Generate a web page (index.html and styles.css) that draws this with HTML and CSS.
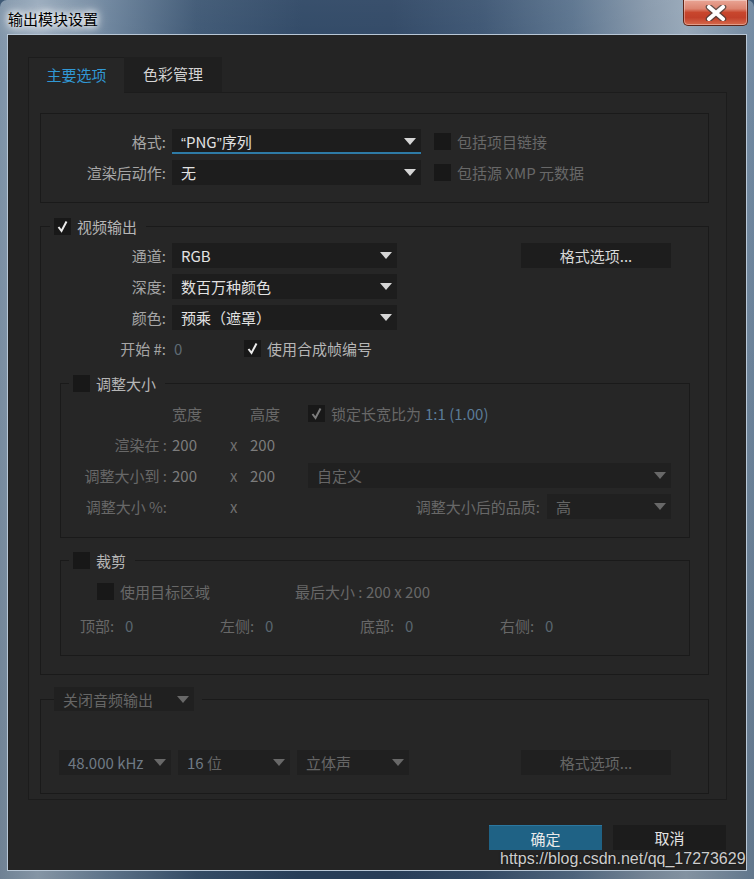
FILE: index.html
```html
<!DOCTYPE html>
<html lang="zh-CN">
<head>
<meta charset="utf-8">
<title>输出模块设置</title>
<link rel="stylesheet" href="styles.css">
</head>
<body>
<div class="window">
  <div class="titlebar">
    <span class="title">输出模块设置</span>
    <div class="close">
      <svg width="22" height="16" viewBox="0 0 22 16">
        <path d="M4 2 L18 14 M18 2 L4 14" stroke="#3c3c3c" stroke-width="6.5" stroke-linecap="round" fill="none" opacity="0.75"/>
        <path d="M4 2 L18 14 M18 2 L4 14" stroke="#ffffff" stroke-width="4" stroke-linecap="round" fill="none"/>
      </svg>
    </div>
  </div>
  <div class="client">
    <div class="tabs">
      <div class="tab active">主要选项</div>
      <div class="tab">色彩管理</div>
    </div>
    <div class="panel">
      <fieldset class="grp fmt">
        <div class="frow">
          <span class="lbl">格式:</span>
          <div class="dd w249 focus"><span><span class="q">“</span>PNG<span class="q">”</span>序列</span><i class="arr"></i></div>
          <span class="cb ml13"></span><span class="dim ml6">包括项目链接</span>
        </div>
        <div class="frow">
          <span class="lbl">渲染后动作:</span>
          <div class="dd w249"><span>无</span><i class="arr"></i></div>
          <span class="cb ml13"></span><span class="dim ml6">包括源 XMP 元数据</span>
        </div>
      </fieldset>

      <fieldset class="grp video">
        <legend class="lg lg-video">
          <span class="cb"><svg width="17" height="17" viewBox="0 0 17 17"><path d="M4.5 9 L7.5 13 L12.5 3.5" stroke="#ececec" stroke-width="2" fill="none"/></svg></span>
          <span class="lgtext">视频输出</span>
        </legend>
        <div class="vrow">
          <span class="lbl">通道:</span>
          <div class="dd w225"><span>RGB</span><i class="arr"></i></div>
          <div class="btn btn-opt">格式选项...</div>
        </div>
        <div class="vrow">
          <span class="lbl">深度:</span>
          <div class="dd w225"><span>数百万种颜色</span><i class="arr"></i></div>
        </div>
        <div class="vrow">
          <span class="lbl">颜色:</span>
          <div class="dd w225"><span>预乘（遮罩）</span><i class="arr"></i></div>
        </div>
        <div class="vrow startrow">
          <span class="lbl">开始 #:</span>
          <span class="startval">0</span>
          <span class="cb"><svg width="17" height="17" viewBox="0 0 17 17"><path d="M4.5 9 L7.5 13 L12.5 3.5" stroke="#ececec" stroke-width="2" fill="none"/></svg></span>
          <span class="lbl2 ml6">使用合成帧编号</span>
        </div>

        <fieldset class="sub resize">
          <legend class="lg lg-sub">
            <span class="cb"></span>
            <span class="lgtext">调整大小</span>
          </legend>
          <div class="rgrid">
            <span></span><span></span>
            <span class="dim">宽度</span><span></span>
            <span class="dim">高度</span>
            <span class="lock">
              <span class="cb"><svg width="17" height="17" viewBox="0 0 17 17"><path d="M4.5 9 L7.5 13 L12.5 3.5" stroke="#7c7c7c" stroke-width="2" fill="none"/></svg></span>
              <span class="dim ml6">锁定长宽比为</span>
              <span class="ratio">1:1 (1.00)</span>
            </span>

            <span class="dim r">渲染在 :</span><span></span>
            <span class="num">200</span><span class="xs">x</span><span class="num">200</span><span></span>

            <span class="dim r">调整大小到 :</span><span></span>
            <span class="num">200</span><span class="xs">x</span><span class="num">200</span>
            <div class="dd dis"><span>自定义</span><i class="arr"></i></div>

            <span class="dim r">调整大小 %:</span><span></span>
            <span></span><span class="xs">x</span><span></span>
            <span class="qual">
              <span class="dim">调整大小后的品质:</span>
              <div class="dd dis w124"><span>高</span><i class="arr"></i></div>
            </span>
          </div>
        </fieldset>

        <fieldset class="sub crop">
          <legend class="lg lg-sub">
            <span class="cb"></span>
            <span class="lgtext">裁剪</span>
          </legend>
          <div class="crow1">
            <span class="cb"></span>
            <span class="dim ml6 target">使用目标区域</span>
            <span class="dim">最后大小 : 200 x 200</span>
          </div>
          <div class="crow2">
            <span class="cell"><span class="dim clbl">顶部:</span><span class="bnum">0</span></span>
            <span class="cell"><span class="dim clbl">左侧:</span><span class="bnum">0</span></span>
            <span class="cell"><span class="dim clbl">底部:</span><span class="bnum">0</span></span>
            <span class="cell"><span class="dim clbl">右侧:</span><span class="bnum">0</span></span>
          </div>
        </fieldset>
      </fieldset>

      <fieldset class="grp audio">
        <legend class="lg lg-audio">
          <div class="dd dis w140"><span>关闭音频输出</span><i class="arr"></i></div>
        </legend>
        <div class="arow">
          <div class="dd dis w112"><span class="bl">48.000 kHz</span><i class="arr"></i></div>
          <div class="dd dis w112"><span><span class="bl">16</span> 位</span><i class="arr"></i></div>
          <div class="dd dis w112"><span>立体声</span><i class="arr"></i></div>
          <div class="btn btn-opt dis">格式选项...</div>
        </div>
      </fieldset>
    </div>
    <div class="actions">
      <div class="btn btn-ok">确定</div>
      <div class="btn btn-cancel">取消</div>
    </div>
  </div>
  <div class="watermark">https://blog.csdn.net/qq_17273629</div>
</div>
</body>
</html>
```

FILE: styles.css
```css
* { box-sizing: border-box; }
html, body { margin: 0; padding: 0; }
body {
  width: 754px;
  height: 879px;
  overflow: hidden;
  background: #3f5a76;
  font-family: "Noto Sans CJK SC", "Noto Sans", sans-serif;
  font-size: 15px;
}

.window {
  position: relative;
  width: 754px;
  height: 879px;
  padding: 0 7px 8px 7px;
  display: flex;
  flex-direction: column;
  border-radius: 7px 7px 0 0;
  background:
    linear-gradient(180deg, rgba(255,255,255,0.06) 0%, rgba(0,0,0,0) 10%, rgba(0,0,0,0.12) 100%),
    linear-gradient(90deg, #7e93a8 0%, #97a9bb 5%, #6b839c 14%, #3b5572 26%, #2c4563 40%, #2d4563 52%, #3a5371 64%, #58718c 76%, #8597aa 86%, #95a6b7 91%, #6f879f 100%);
}

.titlebar {
  height: 34px;
  display: flex;
  justify-content: space-between;
  align-items: flex-start;
  flex: none;
}
.title {
  margin: 10px 0 0 1px;
  line-height: 18px;
  font-size: 15px;
  color: #000;
  text-shadow: 0 0 6px #ffffff, 0 0 10px #ffffff, 0 0 14px rgba(255,255,255,0.85);
}
.close {
  width: 65px;
  height: 26px;
  margin-right: -1px;
  border: 1px solid #5e2416;
  border-top: none;
  border-radius: 0 0 5px 5px;
  background: linear-gradient(180deg, #e9a595 0%, #dc8470 35%, #c8462d 50%, #c2402a 70%, #d66a4c 100%);
  box-shadow: inset 0 0 0 1px rgba(255,255,255,0.35);
  display: flex;
  align-items: center;
  justify-content: center;
}

.client {
  flex: 1;
  border: 1px solid #b8c7d6;
  background: #242424;
  padding: 22px 19px 0 19px;
  display: flex;
  flex-direction: column;
}

.tabs {
  display: flex;
  height: 35px;
  margin-left: 1px;
}
.tab {
  height: 35px;
  display: flex;
  align-items: center;
  justify-content: center;
  color: #d4d4d4;
  background: #1f1f1f;
  width: 98px;
  padding-bottom: 2px;
}
.tab.active {
  position: relative;
  z-index: 1;
  width: 96px;
  height: 36px;
  margin-bottom: -1px;
  background: #262626;
  color: #3198d4;
  border-left: 1px solid #1c1c1c;
  border-top: 1px solid #1c1c1c;
}

.panel {
  width: 699px;
  margin-left: 1px;
  border: 1px solid #1c1c1c;
  background: #262626;
  padding: 20px 17px 5px 11px;
}

fieldset { margin: 0; min-width: 0; }
.grp, .sub {
  border: 1px solid #1a1a1a;
}

.lbl {
  width: 125px;
  flex: none;
  text-align: right;
  color: #a6a6a6;
  margin-right: 6px;
  white-space: nowrap;
}
.lbl2 { color: #b6b6b6; white-space: nowrap; }
.dim { color: #686868; white-space: nowrap; }
.ml6 { margin-left: 6px; }
.ml13 { margin-left: 13px; }
.q { font-family: "Liberation Sans", sans-serif; }

.cb {
  width: 17px;
  height: 17px;
  flex: none;
  background: #181818;
  display: flex;
}

/* dropdowns */
.dd {
  display: flex;
  align-items: center;
  height: 25px;
  background: #1d1d1d;
  color: #e2e2e2;
  padding: 0 5px 0 9px;
  flex: none;
  white-space: nowrap;
}
.dd > span { flex: 1; }
.arr {
  width: 0;
  height: 0;
  border-left: 6px solid transparent;
  border-right: 6px solid transparent;
  border-top: 7px solid #d6d6d6;
}
.dd.dis { background: #202020; color: #666666; }
.dd.dis .arr { border-top-color: #686868; }
.dd.focus { border-bottom: 2px solid #2e7ba6; padding-top: 2px; }
.w249 { width: 249px; }
.w225 { width: 225px; }
.w124 { width: 124px; }
.w140 { width: 140px; }
.w112 { width: 112px; }

.btn {
  height: 25px;
  display: flex;
  align-items: center;
  justify-content: center;
  background: #1d1d1d;
  color: #d8d8d8;
  flex: none;
}
.btn-opt { width: 150px; margin-left: 124px; }
.btn-opt.dis { color: #666666; background: #202020; }

/* format group */
.fmt { padding: 15px 0 17px 0; }
.frow {
  display: flex;
  align-items: center;
  height: 25px;
}
.frow + .frow { margin-top: 6px; }

/* legends */
.lg {
  display: flex;
  align-items: center;
  height: 22px;
}
.lg .cb { margin-right: 6px; }
.lgtext { color: #b6b6b6; }
.lg-video { margin-left: 9px; padding: 0 9px 0 4px; }
.lg-sub { margin-left: 8px; padding: 0 9px 0 4px; }
.lg-audio { margin-left: 13px; padding: 0 8px 0 0; height: 24px; }
.lg-audio .dd { height: 24px; }

/* video group */
.video {
  margin-top: 12px;
  padding: 6px 18px 18px 0;
}
.vrow {
  display: flex;
  align-items: center;
  height: 25px;
  margin-bottom: 6px;
}
.startrow { margin-top: 2px; margin-bottom: 0; }
.startval { width: 70px; margin-left: 2px; color: #5e6a74; flex: none; }

/* resize / crop */
.sub { padding: 7px 18px 18px 0; margin: 11px 0 0 19px; }
.rgrid {
  display: grid;
  grid-template-columns: 106px 5px 58px 20px 58px 1fr;
  grid-auto-rows: 25px;
  row-gap: 6px;
  align-items: center;
}
.r { text-align: right; }
.num { color: #7c7c7c; }
.xs { color: #707070; }
.lock { display: flex; align-items: center; }
.ratio { color: #5a7b98; margin-left: 4px; white-space: nowrap; }
.qual { display: flex; align-items: center; justify-content: flex-end; }
.qual .dd { margin-left: 7px; }

.crop { padding: 8px 18px 17px 0; }
.crow1 {
  display: flex;
  align-items: center;
  height: 25px;
  padding-left: 36px;
}
.target { width: 175px; }
.crow2 {
  display: flex;
  align-items: center;
  height: 25px;
  margin-top: 9px;
  padding-left: 19px;
}
.cell { width: 140px; display: flex; }
.clbl { width: 45px; }
.bnum { color: #5a6670; }

/* audio */
.audio {
  margin-top: 12px;
  padding: 39px 18px 18px 0;
}
.arow { display: flex; align-items: center; gap: 7px; height: 25px; padding-left: 18px; }
.arow .btn-opt.dis { margin-left: 105px; }
.bl { color: #6f7a85; }

/* bottom buttons */
.actions {
  width: 699px;
  margin-left: 1px;
  margin-top: 25px;
  padding-right: 1px;
  display: flex;
  justify-content: flex-end;
  gap: 11px;
}
.btn-ok, .btn-cancel { width: 113px; height: 25px; }
.btn-ok {
  background: #1f6285;
  border-top: 1px solid #2b77a0;
  color: #eaeaea;
}
.btn-cancel { background: #1c1c1c; color: #e2e2e2; }

.watermark {
  position: absolute;
  left: 500px;
  top: 850px;
  font-family: "Liberation Sans", Arial, sans-serif;
  font-size: 16px;
  line-height: 18px;
  color: #cdcdcd;
  text-shadow: 0 0 2px rgba(0,0,0,0.7);
  white-space: nowrap;
}
```
